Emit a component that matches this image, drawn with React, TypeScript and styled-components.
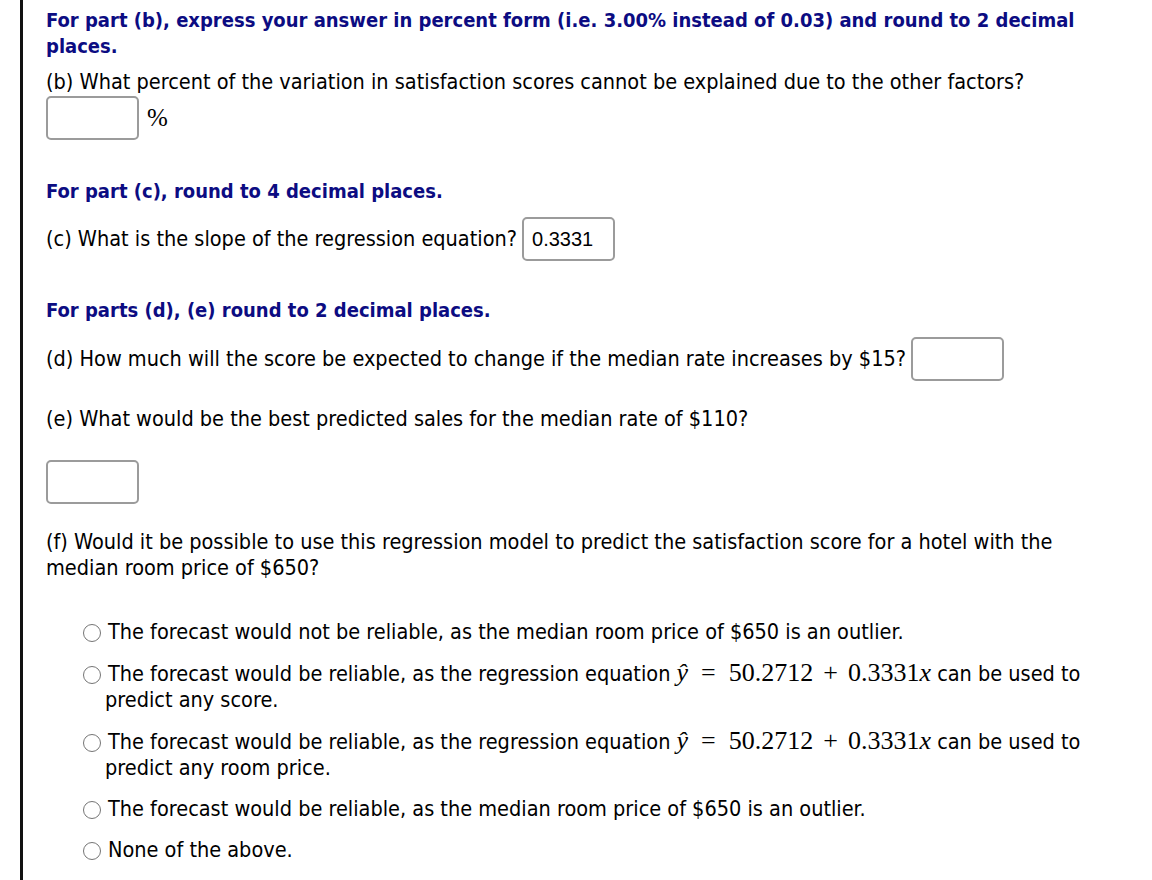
import styled, { createGlobalStyle } from "styled-components";

const Global = createGlobalStyle`
  html, body {
    margin: 0;
    background: #fff;
  }
  body {
    font-family: "DejaVu Sans Condensed", "DejaVu Sans", sans-serif;
    font-stretch: condensed;
  }
`;

const Page = styled.div`
  margin-left: 20px;
  border-left: 3px solid #111;
  padding: 7px 0 0 23px;
  width: 1064px;
  min-height: 873px;
  font-size: 21.5px;
  line-height: 26px;
  color: #000;
`;

const Note = styled.p<{ $top: number }>`
  margin: ${({ $top }) => $top}px 0 0;
  font-size: 20px;
  font-weight: bold;
  color: #0c0c82;
`;

const Question = styled.p<{ $top: number }>`
  margin: ${({ $top }) => $top}px 0 0;
`;

const Row = styled.div<{ $top: number }>`
  display: flex;
  align-items: center;
  gap: 5px;
  margin-top: ${({ $top }) => $top}px;
`;

const Answer = styled.input`
  box-sizing: border-box;
  width: 93px;
  height: 44px;
  margin: 0;
  padding: 0 8px;
  border: 2px solid #9b9b9b;
  border-radius: 5px;
  background: #fff;
  color: #000;
  font-family: "Liberation Sans", Arial, sans-serif;
  font-size: 20px;
  outline: none;
`;

const Unit = styled.span`
  margin-left: 3px;
  font-family: "Liberation Serif", "Times New Roman", serif;
  font-size: 25px;
  line-height: 26px;
`;

const Choices = styled.div`
  margin-top: 38px;
`;

const Choice = styled.label`
  display: block;
  margin-top: 15px;
  padding-left: 59px;
  text-indent: -22px;

  &:first-child {
    margin-top: 0;
  }
`;

const Radio = styled.input.attrs({ type: "radio" })`
  appearance: none;
  box-sizing: border-box;
  width: 18px;
  height: 18px;
  margin: 0 7px 0 0;
  border: 1px solid #757575;
  border-radius: 50%;
  background: #fff;
  vertical-align: -3px;
`;

const Formula = styled.span`
  font-family: "Liberation Serif", "DejaVu Serif", serif;
  font-size: 26px;
  white-space: nowrap;
  text-indent: 0;
`;

const Var = styled.i`
  font-style: italic;
`;

const Op = styled.span<{ $space: number }>`
  margin: 0 ${({ $space }) => $space}px;
`;

const regression = (
  <Formula>
    <Var>ŷ</Var>
    <Op $space={13}>=</Op>50.2712<Op $space={10}>+</Op>0.3331<Var>x</Var>
  </Formula>
);

const options = [
  <>The forecast would not be reliable, as the median room price of $650 is an outlier.</>,
  <>
    The forecast would be reliable, as the regression equation {regression} can be used to
    predict any score.
  </>,
  <>
    The forecast would be reliable, as the regression equation {regression} can be used to
    predict any room price.
  </>,
  <>The forecast would be reliable, as the median room price of $650 is an outlier.</>,
  <>None of the above.</>,
];

export default function App() {
  return (
    <>
      <Global />
      <Page>
        <Note $top={0}>
          For part (b), express your answer in percent form (i.e. 3.00% instead of 0.03) and
          round to 2 decimal places.
        </Note>
        <Question $top={10}>
          (b) What percent of the variation in satisfaction scores cannot be explained due to the
          other factors?
        </Question>
        <Row $top={1}>
          <Answer aria-label="part b" />
          <Unit>%</Unit>
        </Row>

        <Note $top={38}>For part (c), round to 4 decimal places.</Note>
        <Row $top={13}>
          <span>(c) What is the slope of the regression equation?</span>
          <Answer aria-label="part c" defaultValue="0.3331" />
        </Row>

        <Note $top={36}>For parts (d), (e) round to 2 decimal places.</Note>
        <Row $top={14}>
          <span>
            (d) How much will the score be expected to change if the median rate increases by
            $15?
          </span>
          <Answer aria-label="part d" />
        </Row>
        <Question $top={25}>(e) What would be the best predicted sales for the median rate of $110?</Question>
        <Row $top={28}>
          <Answer aria-label="part e" />
        </Row>

        <Question $top={25}>
          (f) Would it be possible to use this regression model to predict the satisfaction score
          for a hotel with the median room price of $650?
        </Question>
        <Choices>
          {options.map((text, i) => (
            <Choice key={i}>
              <Radio name="part-f" />
              {text}
            </Choice>
          ))}
        </Choices>
      </Page>
    </>
  );
}
